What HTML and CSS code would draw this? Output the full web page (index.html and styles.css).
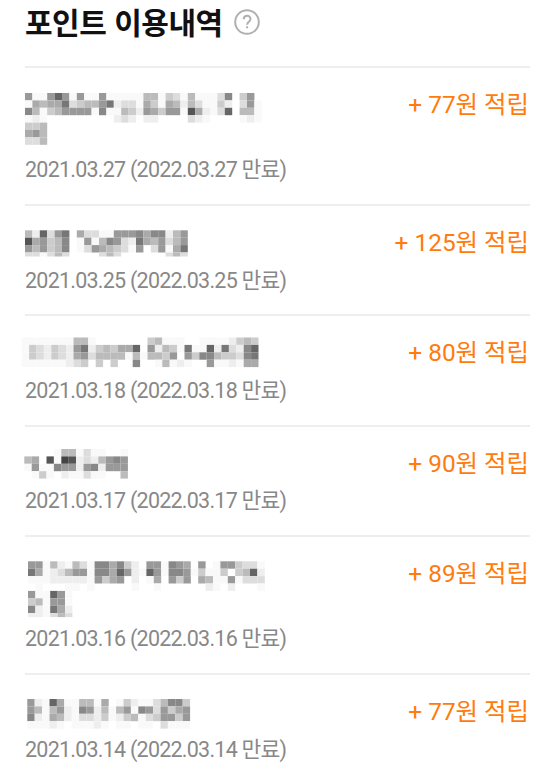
FILE: index.html
```html
<!DOCTYPE html>
<html lang="ko">
<head>
  <meta charset="UTF-8" />
  <meta name="viewport" content="width=device-width, initial-scale=1.0"/>
  <title>포인트 이용내역</title>
  <link rel="stylesheet" href="styles.css">
</head>
<body>
  <div class="container">
    <div class="header">
      <h2>포인트 이용내역</h2>
      <svg class="help" viewBox="0 0 26 26">
        <circle cx="13" cy="13" r="11.8" />
        <path d="M9.7 10.3C9.7 5.6 16.5 5.7 16.5 10C16.5 12.7 13.1 12.7 13.1 15.7M13.1 17.2V19.3" />
      </svg>
    </div>

    <ul class="history">
      <li class="item">
        <div class="info">
          <svg class="name two-line" data-x="0" data-y="2" data-rows="9ff969f9ff9fffffbbfcdfbfffd8.c9.|fabaa7dcbb97eddfacfabebdffce.d9f|8bfcb9999f8ffbce9ac99f5aefd6.bbf|fef.........ede.ee....def....fef|ccb|a9b|ddb"></svg>
          <p class="date">2021.03.27 (2022.03.27 만료)</p>
        </div>
        <span class="point">+ 77원 적립</span>
      </li>
      <li class="item">
        <div class="info">
          <svg class="name" data-x="0" data-y="1.3" data-rows="be6d97.addff9998a88eb9|5a9cb8.f9fb89de7ab9db9|9b9cb8.fd9abcdf9.d9fa7" data-last="ddfdbd....dbd......dbd"></svg>
          <p class="date">2021.03.25 (2022.03.25 만료)</p>
        </div>
        <span class="point">+ 125원 적립</span>
      </li>
      <li class="item">
        <div class="info">
          <svg class="name" data-x="-3.3" data-y="-1.5" data-rows="fffffffbbf.......cbfff..ffffecbc|fcdecde97ecbcaa6.9ebcf7ff6e7de86|fcdecdea9dbbbbfbfbbc9.9c88bccd87|ffffffedc.c.c..8..fbfef..9ffefaa"></svg>
          <p class="date">2021.03.18 (2022.03.18 만료)</p>
        </div>
        <span class="point">+ 80원 적립</span>
      </li>
      <li class="item">
        <div class="info">
          <svg class="name" data-x="-0.7" data-y="-1" data-rows="....fbbfdff..f|ba.5f45edeb989|f9ff899e98e999|.fcf.effdff..b"></svg>
          <p class="date">2021.03.17 (2022.03.17 만료)</p>
        </div>
        <span class="point">+ 90원 적립</span>
      </li>
      <li class="item">
        <div class="info">
          <svg class="name two-line" data-x="3" data-y="1.3" data-rows="99fbefbdf88a8ce.99f89a.9.f99cddf|7afedb99f88a69ef69f889fcffc.cb6e|fffeeeeef9ca9.e.fa.9c9.abff9fddd|.f...ff.f.....f..f......ef.e...f|9ff69f|cbf99f|8ef7ae" data-last="eefdbd"></svg>
          <p class="date">2021.03.16 (2022.03.16 만료)</p>
        </div>
        <span class="point">+ 89원 적립</span>
      </li>
      <li class="item">
        <div class="info">
          <svg class="name" data-x="2.3" data-y="1" data-rows="9ef6affbbfa.fceffdb88c|9bfb9ef89ebfb9f89d9ca9|8efabefddecfecbfdc99c9|fffef.fffef.ff.ff.dfff"></svg>
          <p class="date">2021.03.14 (2022.03.14 만료)</p>
        </div>
        <span class="point">+ 77원 적립</span>
      </li>
    </ul>
  </div>

  <script src="script.js"></script>
</body>
</html>
```
FILE: styles.css
```css
* { box-sizing: border-box; }
body {
  margin: 0;
  font-family: Roboto, "Noto Sans CJK KR", sans-serif;
  background: #fff;
  overflow: hidden;
}

.container {
  width: 505px;
  margin-left: 25px;
}

.header {
  display: flex;
  align-items: center;
  height: 66px;
  padding-bottom: 22px;
}

h2 {
  margin: -2px 0 0;
  font-family: "Noto Sans CJK KR", sans-serif;
  font-size: 30px;
  line-height: 44px;
  letter-spacing: -0.5px;
  color: #111;
  white-space: nowrap;
}

.help {
  width: 26px;
  height: 26px;
  margin-left: 11px;
  fill: none;
  stroke: #b0b0b0;
  stroke-width: 2;
}

.history {
  list-style: none;
  margin: 0;
  padding: 0;
}

.item {
  display: flex;
  justify-content: space-between;
  border-top: 2px solid #eee;
  padding: 23px 0 17.8px;
}

.name {
  display: block;
  width: 245px;
  height: 35.6px;
  overflow: visible;
}

.name.two-line {
  height: 63.2px;
}

.date {
  margin: 0;
  font-size: 21.5px;
  line-height: 32px;
  letter-spacing: -0.76px;
  color: #888;
  white-space: nowrap;
}

.point {
  margin-right: 1px;
  font-size: 24.4px;
  line-height: 28px;
  color: #ff7b0d;
  white-space: nowrap;
}
```
FILE: script.js
```js
// Masked names: every character is the gray level of one block, "." is empty
const SIZE = 7.4;

function drawRow(svg, row, y, height) {
  [...row].forEach((level, i) => {
    if (level === '.') return;
    const rect = document.createElementNS('http://www.w3.org/2000/svg', 'rect');
    const gray = level === 'f' ? 249 : parseInt(level, 16) * 17;
    rect.setAttribute('x', Number(svg.dataset.x) + i * SIZE);
    rect.setAttribute('y', y);
    rect.setAttribute('width', SIZE);
    rect.setAttribute('height', height);
    rect.setAttribute('fill', `rgb(${gray}, ${gray}, ${gray})`);
    svg.appendChild(rect);
  });
}

document.querySelectorAll('.name').forEach((svg) => {
  const top = Number(svg.dataset.y);
  const rows = svg.dataset.rows.split('|');
  rows.forEach((row, i) => drawRow(svg, row, top + i * SIZE, SIZE));
  if (svg.dataset.last) drawRow(svg, svg.dataset.last, top + rows.length * SIZE, 4);
});
```
